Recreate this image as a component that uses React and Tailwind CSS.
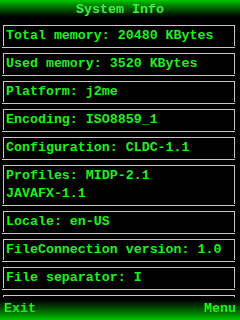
const ITEMS = [
  ["Total memory: 20480 KBytes"],
  ["Used memory: 3520 KBytes"],
  ["Platform: j2me"],
  ["Encoding: ISO8859_1"],
  ["Configuration: CLDC-1.1"],
  ["Profiles: MIDP-2.1", "JAVAFX-1.1"],
  ["Locale: en-US"],
  ["FileConnection version: 1.0"],
  ["File separator: I"],
  [""],
];

const FONT = { fontFamily: '"Liberation Mono", "DejaVu Sans Mono", monospace' };

function Item({ lines }) {
  return (
    <div className="mb-[5px]">
      <div className="ml-[3px] w-[232px] border-l border-t border-r border-[#c8c8c8] pl-[2px] pt-[1px] pb-[1px]">
        {lines.map((line, i) => (
          <div key={i} className="h-[18px] leading-[18px] whitespace-pre text-[#1ef01e]">
            {line}
          </div>
        ))}
      </div>
      <div className="ml-[2px] mt-[1px] w-[233px] h-px bg-[#c8c8c8]" />
    </div>
  );
}

export default function App() {
  return (
    <div
      className="w-[240px] h-[320px] bg-black flex flex-col overflow-hidden text-[13.3px] font-bold"
      style={FONT}
    >
      <div className="h-[20px] shrink-0 bg-gradient-to-b from-[#00c800] to-black flex items-center justify-center text-[#3cf03c]">
        System Info
      </div>
      <div className="flex-1 overflow-hidden pt-[5px]">
        {ITEMS.map((lines, i) => (
          <Item key={i} lines={lines} />
        ))}
      </div>
      <div className="h-[23px] shrink-0 bg-gradient-to-b from-black to-[#00c800] flex items-center justify-between px-[4px] text-[#1ef01e]">
        <span>Exit</span>
        <span>Menu</span>
      </div>
    </div>
  );
}
